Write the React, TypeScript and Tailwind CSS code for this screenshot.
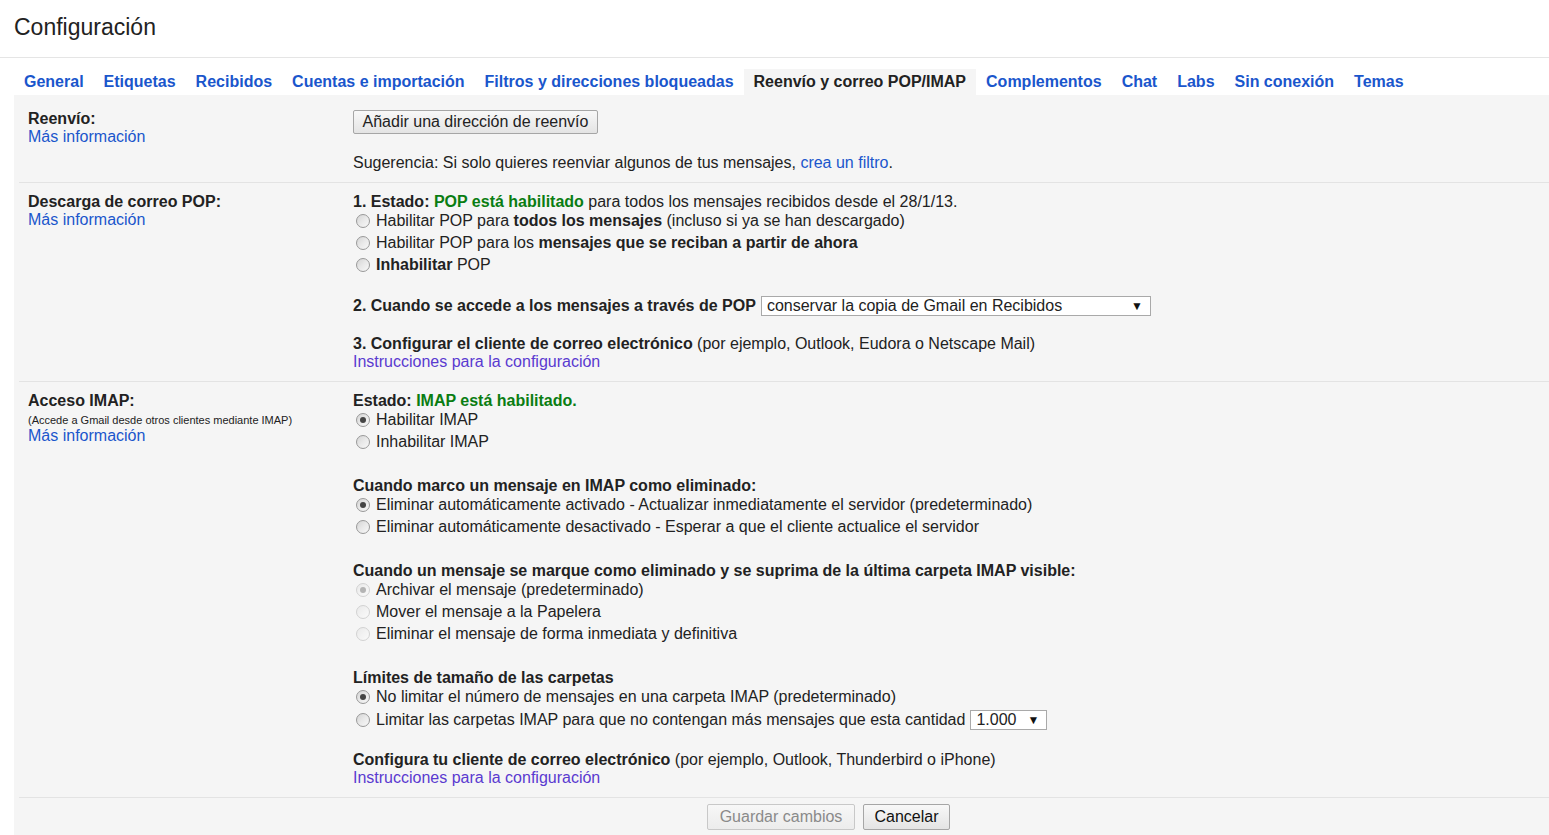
import React from "react";

function Radio({ checked = false, disabled = false }: { checked?: boolean; disabled?: boolean }) {
  return (
    <span
      className={
        disabled
          ? "ml-[3px] mr-[6px] flex h-[14px] w-[14px] shrink-0 items-center justify-center rounded-full border border-[#d2d2d2] bg-gradient-to-br from-[#e9e9e9] via-[#f2f2f2] to-[#fafafa]"
          : "ml-[3px] mr-[6px] flex h-[14px] w-[14px] shrink-0 items-center justify-center rounded-full border border-[#999999] bg-gradient-to-br from-[#d4d4d4] via-[#e9e9e9] to-[#f8f8f8]"
      }
    >
      {checked ? (
        <span
          className={
            disabled
              ? "h-[6px] w-[6px] rounded-full bg-[#b4b4b4]"
              : "h-[6px] w-[6px] rounded-full bg-[#454545]"
          }
        />
      ) : null}
    </span>
  );
}

function RadioRow({
  checked,
  disabled,
  children,
}: {
  checked?: boolean;
  disabled?: boolean;
  children: React.ReactNode;
}) {
  return (
    <div className="flex h-[22px] items-center">
      <Radio checked={checked} disabled={disabled} />
      <span className="whitespace-nowrap">{children}</span>
    </div>
  );
}

function Select({ value, width }: { value: string; width: string }) {
  return (
    <span
      className={`${width} flex h-[20px] items-center justify-between border border-[#a9a9a9] bg-white pl-[5px] pr-[7px] text-[16px] leading-[18px] text-[#222]`}
    >
      <span className="whitespace-nowrap">{value}</span>
      <span className="text-[12px] leading-none text-[#111]">▼</span>
    </span>
  );
}

const tabs = [
  "General",
  "Etiquetas",
  "Recibidos",
  "Cuentas e importación",
  "Filtros y direcciones bloqueadas",
  "Reenvío y correo POP/IMAP",
  "Complementos",
  "Chat",
  "Labs",
  "Sin conexión",
  "Temas",
];

export default function App() {
  const link = "text-[#1a56cc]";
  const visited = "text-[#5a3ad0]";
  return (
    <div className="h-[835px] w-full overflow-hidden bg-white font-['Liberation_Sans',Arial,sans-serif] text-[16px] text-[#222]">
      {/* Header */}
      <div className="flex h-[58px] items-center border-b border-[#e5e5e5] px-[14px] pb-[3px]">
        <h1 className="text-[23px] font-normal leading-none text-[#222]">Configuración</h1>
      </div>

      {/* Tabs */}
      <div className="ml-[14px] flex pt-[11px]">
        {tabs.map((t) =>
          t === "Reenvío y correo POP/IMAP" ? (
            <div
              key={t}
              className="h-[26px] whitespace-nowrap bg-[#f5f5f5] px-[10px] text-[16px] font-bold leading-[26px] text-[#222]"
            >
              {t}
            </div>
          ) : (
            <div
              key={t}
              className="h-[26px] whitespace-nowrap px-[10px] text-[16px] font-bold leading-[26px] text-[#1a56cc]"
            >
              {t}
            </div>
          )
        )}
      </div>

      {/* Panel */}
      <div className="ml-[14px] h-[740px] bg-[#f5f5f5]">
        {/* Reenvío */}
        <div className="ml-[5px] flex border-b border-[#e3e3e3] pl-[9px]">
          <div className="w-[325px] shrink-0 pt-[15px] leading-[18px]">
            <div className="font-bold">Reenvío:</div>
            <div className={link}>Más información</div>
          </div>
          <div className="flex-1 pb-[10px] pt-[15px]">
            <button className="h-[24px] w-[245px] rounded-[2px] border border-[#a6a6a6] bg-gradient-to-b from-[#f8f8f8] to-[#e4e4e4] text-[16px] leading-[20px] text-[#222]">
              Añadir una dirección de reenvío
            </button>
            <div className="mt-[20px] leading-[18px]">
              Sugerencia: Si solo quieres reenviar algunos de tus mensajes,{" "}
              <span className={link}>crea un filtro</span>.
            </div>
          </div>
        </div>

        {/* POP */}
        <div className="ml-[5px] flex border-b border-[#e3e3e3] pl-[9px]">
          <div className="w-[325px] shrink-0 pt-[10px] leading-[18px]">
            <div className="font-bold">Descarga de correo POP:</div>
            <div className={link}>Más información</div>
          </div>
          <div className="flex-1 pb-[10px] pt-[10px] leading-[18px]">
            <div className="h-[17px] whitespace-nowrap leading-[17px]">
              <span className="font-bold">1. Estado: </span>
              <span className="font-bold text-[#0a7d12]">POP está habilitado</span> para todos los
              mensajes recibidos desde el 28/1/13.
            </div>
            <RadioRow>
              Habilitar POP para <b>todos los mensajes</b> (incluso si ya se han descargado)
            </RadioRow>
            <RadioRow>
              Habilitar POP para los <b>mensajes que se reciban a partir de ahora</b>
            </RadioRow>
            <RadioRow>
              <b>Inhabilitar</b> POP
            </RadioRow>
            <div className="mt-[19px] flex h-[22px] items-center">
              <span className="mr-[5px] whitespace-nowrap font-bold">
                2. Cuando se accede a los mensajes a través de POP
              </span>
              <Select value="conservar la copia de Gmail en Recibidos" width="w-[390px]" />
            </div>
            <div className="mt-[18px] whitespace-nowrap">
              <b>3. Configurar el cliente de correo electrónico</b> (por ejemplo, Outlook, Eudora o
              Netscape Mail)
            </div>
            <div className={visited}>Instrucciones para la configuración</div>
          </div>
        </div>

        {/* IMAP */}
        <div className="ml-[5px] flex border-b border-[#e3e3e3] pl-[9px]">
          <div className="w-[325px] shrink-0 pt-[10px] leading-[18px]">
            <div className="font-bold">Acceso IMAP:</div>
            <div className="mt-[3px] text-[11px] leading-[14px]">
              (Accede a Gmail desde otros clientes mediante IMAP)
            </div>
            <div className={link}>Más información</div>
          </div>
          <div className="flex-1 pb-[10px] pt-[10px] leading-[18px]">
            <div className="h-[17px] leading-[17px]">
              <span className="font-bold">Estado: </span>
              <span className="font-bold text-[#0a7d12]">IMAP está habilitado.</span>
            </div>
            <RadioRow checked>Habilitar IMAP</RadioRow>
            <RadioRow>Inhabilitar IMAP</RadioRow>

            <div className="mt-[24px] h-[17px] font-bold leading-[17px]">
              Cuando marco un mensaje en IMAP como eliminado:
            </div>
            <RadioRow checked>
              Eliminar automáticamente activado - Actualizar inmediatamente el servidor (predeterminado)
            </RadioRow>
            <RadioRow>
              Eliminar automáticamente desactivado - Esperar a que el cliente actualice el servidor
            </RadioRow>

            <div className="mt-[24px] h-[17px] font-bold leading-[17px]">
              Cuando un mensaje se marque como eliminado y se suprima de la última carpeta IMAP visible:
            </div>
            <RadioRow checked disabled>
              Archivar el mensaje (predeterminado)
            </RadioRow>
            <RadioRow disabled>Mover el mensaje a la Papelera</RadioRow>
            <RadioRow disabled>Eliminar el mensaje de forma inmediata y definitiva</RadioRow>

            <div className="mt-[24px] h-[17px] font-bold leading-[17px]">
              Límites de tamaño de las carpetas
            </div>
            <RadioRow checked>
              No limitar el número de mensajes en una carpeta IMAP (predeterminado)
            </RadioRow>
            <div className="flex h-[24px] items-center">
              <Radio />
              <span className="mr-[5px] whitespace-nowrap">
                Limitar las carpetas IMAP para que no contengan más mensajes que esta cantidad
              </span>
              <Select value="1.000" width="w-[77px]" />
            </div>

            <div className="mt-[19px] whitespace-nowrap">
              <b>Configura tu cliente de correo electrónico</b> (por ejemplo, Outlook, Thunderbird o
              iPhone)
            </div>
            <div className={visited}>Instrucciones para la configuración</div>
          </div>
        </div>

        {/* Footer buttons */}
        <div className="flex gap-[8px] pl-[693px] pt-[6px]">
          <button className="h-[26px] w-[148px] rounded-[2px] border border-[#c8c8c8] bg-gradient-to-b from-[#f7f7f7] to-[#ececec] text-[16px] leading-[22px] text-[#8a8a8a]">
            Guardar cambios
          </button>
          <button className="h-[26px] w-[87px] rounded-[2px] border border-[#a6a6a6] bg-gradient-to-b from-[#f8f8f8] to-[#e4e4e4] text-[16px] leading-[22px] text-[#111]">
            Cancelar
          </button>
        </div>
      </div>
    </div>
  );
}
